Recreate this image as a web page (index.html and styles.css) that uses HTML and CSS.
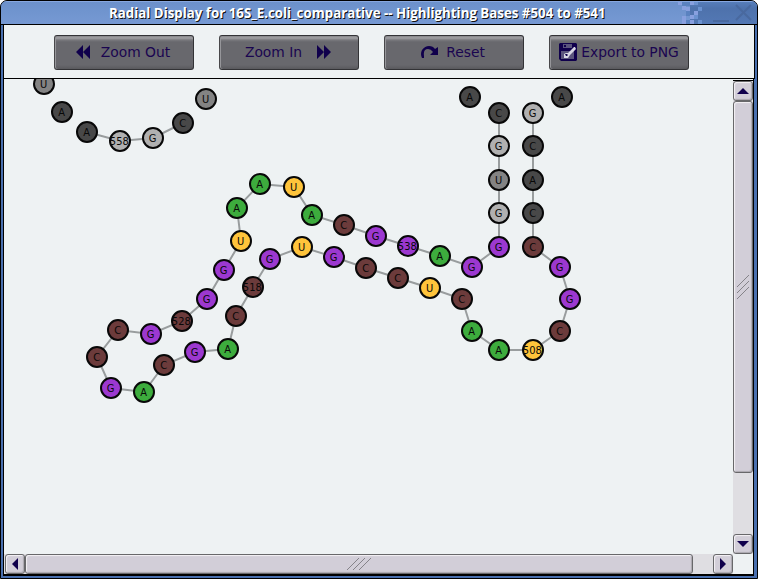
FILE: index.html
```html
<!DOCTYPE html>
<html lang="en">
<head>
<meta charset="utf-8">
<title>Radial Display</title>
<link rel="stylesheet" href="styles.css">
</head>
<body>
<div class="window">
  <header class="titlebar">
    <h1 class="title">Radial Display for 16S_E.coli_comparative -- Highlighting Bases #504 to #541</h1>
    <svg class="controls" width="80" height="22" viewBox="678 2 80 22" shape-rendering="crispEdges">
      <defs><linearGradient id="fade" x1="0" x2="0" y1="0" y2="1"><stop offset="0" stop-color="#567db9"/><stop offset=".3" stop-color="#4e72ac"/><stop offset="1" stop-color="#5378b4"/></linearGradient></defs>
      <rect x="690" y="2" width="67" height="22" fill="url(#fade)"/>
      <path fill="#5a82c0" d="M682 2h8v4h-8zM686 11h4v5h-4zM686 20h4v4h-4z"/>
      <path fill="#88a0df" d="M678 2h4v3h-4zM690 2h4v3h-4zM682 6h4v4h-4zM686 7h4v4h-4zM694 11h4v4h-4zM682 16h4v4h-4zM690 15h4v4h-4zM682 20h4v4h-4zM690 20h4v4h-4z"/>
      <path fill="#6b92d0" d="M694 2h4v3h-4zM698 7h4v4h-4zM694 15h4v4h-4zM698 20h4v4h-4z"/>
      <path d="M713 21h16" stroke="#49699f" stroke-width="2"/>
      <path d="M736 5l15 15M751 5l-15 15" stroke="#49699f" stroke-width="2" shape-rendering="auto"/>
    </svg>
  </header>
  <div class="toolbar">
    <button class="btn out"><svg width="14" height="14"><path d="M7 0v14L0 7zM14 0v14L7 7z"/></svg><span>Zoom Out</span></button>
    <button class="btn in"><span>Zoom In</span><svg width="14" height="14"><path d="M0 0v14l7-7zM7 0v14l7-7z"/></svg></button>
    <button class="btn reset"><svg width="18" height="14" viewBox="0 0 18 14"><path d="M1 13Q-1 9 1 5Q4 1 8 1Q12 1 14 4L17 2v8H9l3-3Q10 4 7 4Q2 4 3 11v2z"/></svg><span>Reset</span></button>
    <button class="btn export"><svg width="18" height="18" viewBox="0 0 18 18"><path d="M0 1l1-1h16l1 1v16l-1 1H2l-2-2z"/><path class="shade" d="M4 1h9v4H4zM2 8h13v8H2z"/><path d="M5 2h2v2H5z"/><path class="pen" d="M5 11l2-1 2 0 6-6h1l1 2-6 6-2 3H5z"/><path d="M6 11h2l1 1-1 1H7z"/></svg><span>Export to PNG</span></button>
  </div>
  <main class="viewport">
    <svg class="canvas" id="canvas" width="729" height="475" viewBox="4 79 729 475"></svg>
    <div class="bar vertical">
      <div class="knob"><svg width="12" height="6"><path d="M6 0l6 6H0z"/></svg></div>
      <div class="knob thumb"><svg width="14" height="26"><path d="M1 13L13 1M1 19L13 7M1 25L13 13"/></svg></div>
      <div class="track"></div>
      <div class="knob"><svg width="12" height="6"><path d="M0 0h12L6 6z"/></svg></div>
    </div>
    <div class="bar horizontal">
      <div class="knob"><svg width="6" height="12"><path d="M6 0v12L0 6z"/></svg></div>
      <div class="knob thumb"><svg width="26" height="14"><path d="M1 13L13 1M7 13L19 1M13 13L25 1"/></svg></div>
      <div class="track"></div>
      <div class="knob"><svg width="6" height="12"><path d="M0 0v12l6-6z"/></svg></div>
    </div>
    <div class="corner"></div>
  </main>
</div>
<script src="bases.js"></script>
</body>
</html>
```
FILE: styles.css
```css
* { box-sizing: border-box; }
body { margin: 0; background: #fff; font-family: "DejaVu Sans", sans-serif; }
.window {
  width: 758px; height: 579px;
  border: 1px solid #000; border-radius: 7px 7px 0 0;
  background: #496fae; overflow: hidden;
  display: flex; flex-direction: column;
}
.titlebar {
  height: 24px; flex: none; position: relative;
  border-top: 1px solid #87a7df; border-bottom: 1px solid #000;
  background: linear-gradient(#6c91cb, #7699d3);
}
.title {
  margin: 0; padding-left: 108px; white-space: nowrap;
  font: bold 13.3px/22px "Open Sans", "Noto Sans", sans-serif;
  color: #fff; text-shadow: 1px 1px 0 #111;
}
.controls { position: absolute; right: -1px; top: 0; }
.toolbar {
  height: 54px; flex: none; margin: 0 2px; padding: 10px 0 0 50px;
  border: solid #000; border-width: 0 1px 1px;
  background: #eef2f3; display: flex; gap: 25px;
}
.btn {
  width: 140px; height: 35px; padding: 0 2px 2px 0; border: 1px solid #333336; border-left-color: #48484a;
  border-radius: 3px; display: flex; align-items: center; justify-content: center;
  background: linear-gradient(#858589 0, #a1a1a4 2px, #79797d 4px, #68686d 6px, #68686d 29px, #59595d 33px);
  box-shadow: inset 1px 0 #96969a;
  color: #1a0550; font: 13.85px/20px "DejaVu Sans", sans-serif; white-space: nowrap;
}
.btn svg { fill: #10004c; flex: none; }
.btn svg .shade { fill: #5b557d; }
.btn svg .pen { fill: #d8d7e4; }
.out { gap: 11px; }
.in { gap: 15px; }
.reset { gap: 7px; }
.export { gap: 4px; padding-right: 0; }
.viewport {
  width: 751px; height: 497px; margin-left: 2px; flex: none;
  border: solid #000; border-width: 0 1px 2px;
  display: grid; grid-template: 475px 20px / 729px 20px;
  background: #eef2f3;
}
.canvas { display: block; }
.link { stroke: #999d9e; stroke-width: 2; fill: none; }
.base { stroke: #080808; stroke-width: 2; }
.label { font: 11px "DejaVu Sans Condensed", "DejaVu Sans", sans-serif; font-stretch: condensed; fill: #080808; text-anchor: middle; }
.bar { display: flex; background: #dfdee2; }
.vertical { flex-direction: column; border-top: 1px solid #000; margin-top: 1px; }
.horizontal { padding-left: 1px; }
.knob {
  flex: none; width: 20px; height: 20px; border: 1px solid #68686a; border-radius: 3px;
  display: flex; align-items: center; justify-content: center;
  background: #d2ced8; box-shadow: inset 1px 1px 1px #f4f2f6, inset -1px -1px 1px #aaa8af;
}
.knob svg { fill: #10004c; }
.thumb svg { fill: none; stroke: #858389; stroke-width: 1; }
.vertical .thumb { height: 372px; }
.horizontal .thumb { width: 668px; }
.track { flex: 1; }
.corner { background: #eef2f3; }
```
FILE: bases.js
```js
const colours = { A: "#3dac3d", C: "#6c3b3b", G: "#9c38d0", U: "#ffc43b" };
const dark = "#484848", mid = "#838383", light = "#b0b0b0";

// Each strand: [x, y, label, fill]
const strands = [
  [[44, 84, "U", mid]],
  [[62, 112, "A", dark]],
  [[87, 132, "A", dark], [120, 141, "558", light], [153, 138, "G", light], [183, 123, "C", dark]],
  [[206, 99, "U", mid]],
  [[470, 97, "A", dark]],
  [[562, 97, "A", dark]],
  [
    [533, 113, "G", light], [533, 146, "C", dark], [533, 180, "A", dark], [533, 213, "C", dark],
    [533, 247, "C"], [560, 267, "G"], [570, 299, "G"], [560, 331, "C"], [533, 350, "508", colours.U],
    [499, 350, "A"], [472, 331, "A"], [462, 299, "C"], [430, 288, "U"], [398, 278, "C"],
    [366, 268, "C"], [334, 257, "G"], [302, 247, "U"], [270, 259, "G"], [253, 287, "518", colours.C],
    [236, 316, "C"], [228, 349, "A"], [195, 352, "G"], [164, 365, "C"], [144, 392, "A"],
    [111, 388, "G"], [97, 357, "C"], [118, 330, "C"], [151, 334, "G"], [182, 321, "528", colours.C],
    [207, 299, "G"], [224, 270, "G"], [241, 241, "U"], [237, 208, "A"], [260, 184, "A"],
    [294, 187, "U"], [312, 215, "A"], [344, 225, "C"], [376, 236, "G"], [408, 246, "538", colours.G],
    [440, 256, "A"], [472, 267, "G"], [499, 247, "G"], [499, 213, "G", light], [499, 180, "U", mid],
    [499, 146, "G", light], [499, 113, "C", dark]
  ]
];

const canvas = document.getElementById("canvas");
function add(name, attrs, text) {
  const el = document.createElementNS("http://www.w3.org/2000/svg", name);
  for (const key in attrs) el.setAttribute(key, attrs[key]);
  if (text) el.textContent = text;
  canvas.appendChild(el);
}
for (const strand of strands) {
  add("polyline", { class: "link", points: strand.map(b => b[0] + "," + b[1]).join(" ") });
  for (const [x, y, label, fill] of strand) {
    add("circle", { class: "base", cx: x, cy: y, r: 10, fill: fill || colours[label] });
    add("text", { class: "label", x: label.length > 1 ? x - 0.7 : x - 0.3, y: y + 4 }, label);
  }
}
```
